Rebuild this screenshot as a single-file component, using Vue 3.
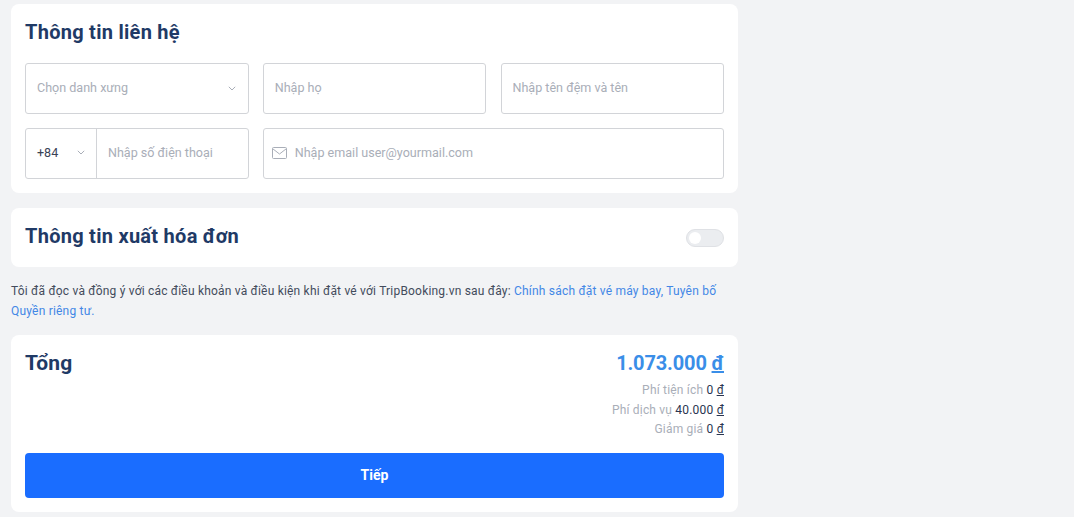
<script setup>
import { ref } from "vue";

const invoice = ref(false);
const fees = [
  { label: "Phí tiện ích", value: "0" },
  { label: "Phí dịch vụ", value: "40.000" },
  { label: "Giảm giá", value: "0" },
];
</script>

<template>
  <div class="page">
    <section class="card contact">
      <h2 class="title">Thông tin liên hệ</h2>
      <div class="fields">
        <div class="field select">
          <span class="placeholder">Chọn danh xưng</span>
          <svg class="chevron" width="8" height="5" viewBox="0 0 8 5"><path d="M.8.8 4 4 7.2.8" /></svg>
        </div>
        <div class="field"><input placeholder="Nhập họ" /></div>
        <div class="field"><input placeholder="Nhập tên đệm và tên" /></div>
        <div class="field phone">
          <div class="code">
            <span>+84</span>
            <svg class="chevron" width="8" height="5" viewBox="0 0 8 5"><path d="M.8.8 4 4 7.2.8" /></svg>
          </div>
          <input placeholder="Nhập số điện thoại" />
        </div>
        <div class="field email">
          <svg class="mail" width="15" height="12" viewBox="0 0 15 12">
            <rect x=".5" y=".5" width="14" height="11" rx="1" />
            <path d="M.8 1.8 7.5 7l6.7-5.2" />
          </svg>
          <input placeholder="Nhập email user@yourmail.com" />
        </div>
      </div>
    </section>

    <section class="card invoice">
      <h2 class="title">Thông tin xuất hóa đơn</h2>
      <button class="toggle" :class="{ on: invoice }" @click="invoice = !invoice"><span class="knob"></span></button>
    </section>

    <p class="terms">
      Tôi đã đọc và đồng ý với các điều khoản và điều kiện khi đặt vé với TripBooking.vn sau đây:
      <a href="#">Chính sách đặt vé máy bay, Tuyên bố Quyền riêng tư.</a>
    </p>

    <section class="card total">
      <div class="summary">
        <h2 class="title sum">Tổng</h2>
        <div class="amounts">
          <div class="price">1.073.000 <u>đ</u></div>
          <div class="fee" v-for="fee in fees" :key="fee.label">
            {{ fee.label }} <b>{{ fee.value }} <u>đ</u></b>
          </div>
        </div>
      </div>
      <button class="next">Tiếp</button>
    </section>
  </div>
</template>

<style scoped>
.page {
  width: 727px;
  margin-left: 11px;
  padding-top: 4px;
  font-family: Roboto, "Liberation Sans", sans-serif;
}
.card {
  background: #fff;
  border-radius: 8px;
  padding: 0 14px;
}
.title {
  margin: 0;
  font-size: 20px;
  line-height: 28px;
  font-weight: 700;
  letter-spacing: 0.27px;
  color: #1f3a66;
}
.title.sum {
  font-size: 21px;
  letter-spacing: 0.1px;
}
.contact {
  height: 189px;
  padding-top: 14px;
  box-sizing: border-box;
}
.fields {
  display: grid;
  grid-template-columns: repeat(3, minmax(0, 1fr));
  gap: 14px 14.25px;
  margin-top: 17px;
}
.field {
  height: 51px;
  box-sizing: border-box;
  border: 1px solid #d2d4d8;
  border-radius: 3px;
  display: flex;
  align-items: center;
  font-size: 12.55px;
}
input {
  flex: 1;
  min-width: 0;
  height: 100%;
  border: 0;
  outline: 0;
  padding: 0 11px 2px;
  box-sizing: border-box;
  background: transparent;
  font: inherit;
  color: #1f3a66;
}
input::placeholder,
.placeholder {
  color: #a9aeb8;
  opacity: 1;
}
.select {
  justify-content: space-between;
  padding: 0 12px 0 11px;
}
.select .placeholder {
  margin-top: -2px;
}
.chevron {
  fill: none;
  stroke: #a9aeb8;
  stroke-width: 1;
}
.code {
  width: 71px;
  height: 100%;
  flex: none;
  box-sizing: border-box;
  border-right: 1px solid #d2d4d8;
  display: flex;
  align-items: center;
  justify-content: space-between;
  padding: 0 11px 2px;
  color: #3a4356;
}
.email {
  grid-column: span 2;
  padding-left: 8px;
}
.email input {
  padding-left: 8px;
}
.mail {
  flex: none;
  margin-top: -2px;
  fill: none;
  stroke: #a9aeb8;
}
.invoice {
  height: 59px;
  margin-top: 15px;
  display: flex;
  align-items: center;
  justify-content: space-between;
}
.invoice .title {
  margin-bottom: 3px;
}
.toggle {
  width: 38px;
  height: 18px;
  box-sizing: border-box;
  padding: 2px;
  border: 1px solid #dfe1e5;
  border-radius: 9px;
  background: #ebedf0;
  display: flex;
}
.knob {
  width: 12px;
  height: 12px;
  border-radius: 50%;
  background: #fff;
}
.toggle.on {
  justify-content: flex-end;
  background: #1a6dff;
}
.terms {
  margin: 14px 0;
  font-size: 12px;
  line-height: 20px;
  letter-spacing: 0.2px;
  color: #434b5c;
}
.terms a {
  color: #4387e6;
  text-decoration: none;
}
.total {
  height: 177px;
  padding-top: 14px;
  box-sizing: border-box;
}
.summary {
  display: flex;
  justify-content: space-between;
  height: 104px;
}
.amounts {
  text-align: right;
}
.price {
  font-size: 20px;
  line-height: 28px;
  font-weight: 700;
  letter-spacing: -0.15px;
  margin-bottom: 4px;
  color: #3a8ee8;
}
.fee {
  font-size: 12px;
  line-height: 19.5px;
  letter-spacing: 0.2px;
  color: #a9aeb8;
}
.fee b {
  font-weight: 400;
  color: #2a3550;
}
.next {
  display: block;
  width: 100%;
  height: 45px;
  border: 0;
  border-radius: 4px;
  padding-bottom: 3px;
  background: #1a6dff;
  color: #fff;
  font: 700 14px Roboto, "Liberation Sans", sans-serif;
}
</style>

<style>
html,
body {
  background: #f2f3f5;
}
</style>
